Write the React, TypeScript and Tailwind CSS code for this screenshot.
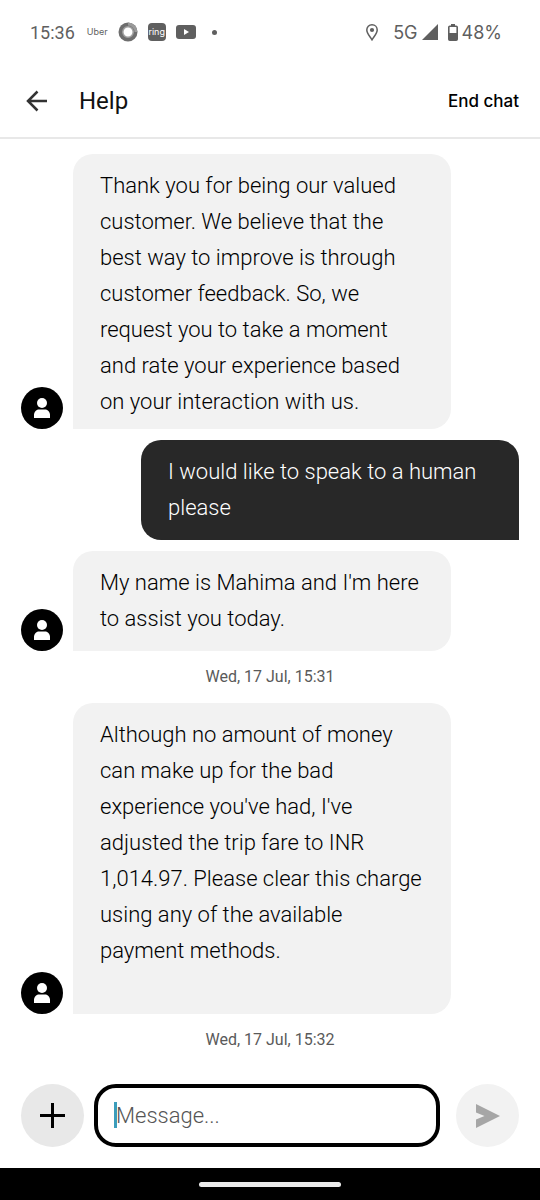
import { clsx } from "clsx";

type Entry =
  | { kind: "agent" | "user"; text: string }
  | { kind: "time"; text: string };

const entries: Entry[] = [
  {
    kind: "agent",
    text: "Thank you for being our valued customer. We believe that the best way to improve is through customer feedback. So, we request you to take a moment and rate your experience based on your interaction with us.",
  },
  { kind: "user", text: "I would like to speak to a human please" },
  {
    kind: "agent",
    text: "My name is Mahima and I'm here to assist you today.",
  },
  { kind: "time", text: "Wed, 17 Jul, 15:31" },
  {
    kind: "agent",
    text: "Although no amount of money can make up for the bad experience you've had, I've adjusted the trip fare to INR 1,014.97. Please clear this charge using any of the available payment methods.\n\u00a0",
  },
  { kind: "time", text: "Wed, 17 Jul, 15:32" },
];

const StatusBar = () => {
  return (
    <div className="flex h-16 items-center justify-between pr-[38px] pl-[30px] text-[18px] text-[#5f5f5f]">
      <div className="flex items-center">
        <span>15:36</span>
        <span className="ml-3 font-['Inter',sans-serif] text-[9px]">Uber</span>
        <svg className="ml-2.5 size-5" viewBox="0 0 20 20" aria-hidden="true">
          <circle cx="10" cy="10" r="9.5" fill="#6e6e6e" />
          <path d="M10 .5a9.5 9.5 0 0 1 9.5 9.5h-3A6.5 6.5 0 0 0 10 3.5z" fill="#9a9a9a" />
          <circle cx="10" cy="10" r="5.2" fill="#fff" stroke="#a0a0a0" strokeWidth="1.5" />
        </svg>
        <span className="ml-2.5 flex size-[18px] items-center justify-center rounded-sm bg-[#5f5f5f] font-['Inter',sans-serif] text-[9px] text-white">
          ring
        </span>
        <svg className="ml-2.5 h-3.5 w-5" viewBox="0 0 20 14" aria-hidden="true">
          <rect width="20" height="14" rx="3" fill="#5f5f5f" />
          <path d="M8 4v6l5-3z" fill="#fff" />
        </svg>
        <span className="ml-4 size-[5px] rounded-full bg-[#5f5f5f]" />
      </div>

      <div className="flex items-center font-['Inter',sans-serif]">
        <svg className="h-[17px] w-3" viewBox="0 0 12 17" aria-hidden="true">
          <path
            d="M6 .8C3 .8.8 3 .8 6c0 3.500 3.200 6.500 5.200 9.800C8 12.500 11.200 9.500 11.200 6c0-3-2.200-5.200-5.200-5.200z"
            fill="none"
            stroke="#5f5f5f"
            strokeWidth="1.5"
          />
          <circle cx="6" cy="6" r="2.1" fill="#5f5f5f" />
        </svg>
        <span className="ml-[15px]">5G</span>
        <svg className="ml-1 size-4" viewBox="0 0 16 16" aria-hidden="true">
          <path d="M16 0v16H0z" fill="#5f5f5f" />
        </svg>
        <svg className="ml-2.5 h-[17px] w-2.5" viewBox="0 0 10 17" aria-hidden="true">
          <rect x="3" width="4" height="2" fill="#5f5f5f" />
          <rect x=".8" y="2.3" width="8.4" height="13.9" rx="1" fill="none" stroke="#5f5f5f" strokeWidth="1.6" />
          <path d="M1 9h8v7H1z" fill="#5f5f5f" />
        </svg>
        <span className="ml-1">48%</span>
      </div>
    </div>
  );
};

const Avatar = () => {
  return (
    <span className="flex size-[42px] shrink-0 items-center justify-center rounded-full bg-black">
      <svg className="h-5 w-4" viewBox="0 0 16 20" fill="#fff" aria-hidden="true">
        <circle cx="8" cy="5" r="5" />
        <path d="M0 20v-3c0-3 2-5.500 5-5.500h6c3 0 5 2.500 5 5.500v3z" />
      </svg>
    </span>
  );
};

const Message = ({ kind, text }: { kind: "agent" | "user"; text: string }) => {
  const mine = kind === "user";

  return (
    <div className={clsx("flex items-end gap-2.5", mine && "justify-end")}>
      {!mine && <Avatar />}
      <p
        className={clsx(
          "min-h-[100px] w-full max-w-[378px] rounded-[20px] px-[27px] pt-3.5 pb-[9px] text-[22px] leading-9 font-light whitespace-pre-line",
          mine
            ? "rounded-br-none bg-[#282828] text-white"
            : "rounded-bl-none bg-[#f2f2f2] text-black",
        )}
      >
        {text}
      </p>
    </div>
  );
};

export default function App() {
  return (
    <div className="flex min-h-screen flex-col bg-white font-['Roboto',sans-serif]">
      <StatusBar />

      <header className="flex h-[75px] items-center border-b-2 border-[#e8e8e8] pr-[21px] pl-[26px]">
        <button type="button" aria-label="Back">
          <svg className="size-[22px]" viewBox="0 0 22 22" fill="none" stroke="#333" strokeWidth="2.5" aria-hidden="true">
            <path d="M21 11H2M11.500 1.500 2 11l9.500 9.500" />
          </svg>
        </button>
        <h1 className="ml-[31px] text-2xl text-[#111]">Help</h1>
        <button type="button" className="ml-auto pt-0.5 font-['Inter',sans-serif] text-[17px] font-medium text-black">
          End chat
        </button>
      </header>

      <main className="flex flex-col gap-[11px] px-[21px] pt-[15px]">
        {entries.map((entry, index) =>
          entry.kind === "time" ? (
            <time key={index} className="py-1 text-center text-base leading-[22px] text-[#5a5a5a]">
              {entry.text}
            </time>
          ) : (
            <Message key={index} kind={entry.kind} text={entry.text} />
          ),
        )}
      </main>

      <form className="mt-auto flex items-center px-[21px] pb-[21px]" onSubmit={(e) => e.preventDefault()}>
        <button
          type="button"
          aria-label="Add attachment"
          className="flex size-[63px] shrink-0 items-center justify-center rounded-full bg-[#e8e8e8]"
        >
          <svg className="size-[25px]" viewBox="0 0 25 25" stroke="#000" strokeWidth="3" aria-hidden="true">
            <path d="M12.500 0v25M0 12.500h25" />
          </svg>
        </button>
        <div className="relative mx-2.5 min-w-0 flex-1">
          <input
            type="text"
            aria-label="Message"
            placeholder="Message..."
            className="h-[63px] w-full rounded-[22px] border-4 border-black px-[18px] text-[22px] font-light text-black outline-none placeholder:text-[#555]"
          />
          {/* text cursor */}
          <span className="absolute top-[18px] left-5 h-[26px] w-[3px] bg-[#3c9dbb]" />
        </div>
        <button
          type="submit"
          aria-label="Send"
          className="ml-1.5 flex size-[63px] shrink-0 items-center justify-center rounded-full bg-[#f2f2f2]"
        >
          <svg className="size-6" viewBox="0 0 24 24" fill="#a6a6a6" aria-hidden="true">
            <path d="M0 0l24 12L0 24v-8.500L8.500 12 0 8.500z" />
          </svg>
        </button>
      </form>

      <div className="flex h-8 items-center justify-center bg-black">
        <span className="h-[5px] w-[142px] rounded-full bg-[#ebebeb]" />
      </div>
    </div>
  );
}
